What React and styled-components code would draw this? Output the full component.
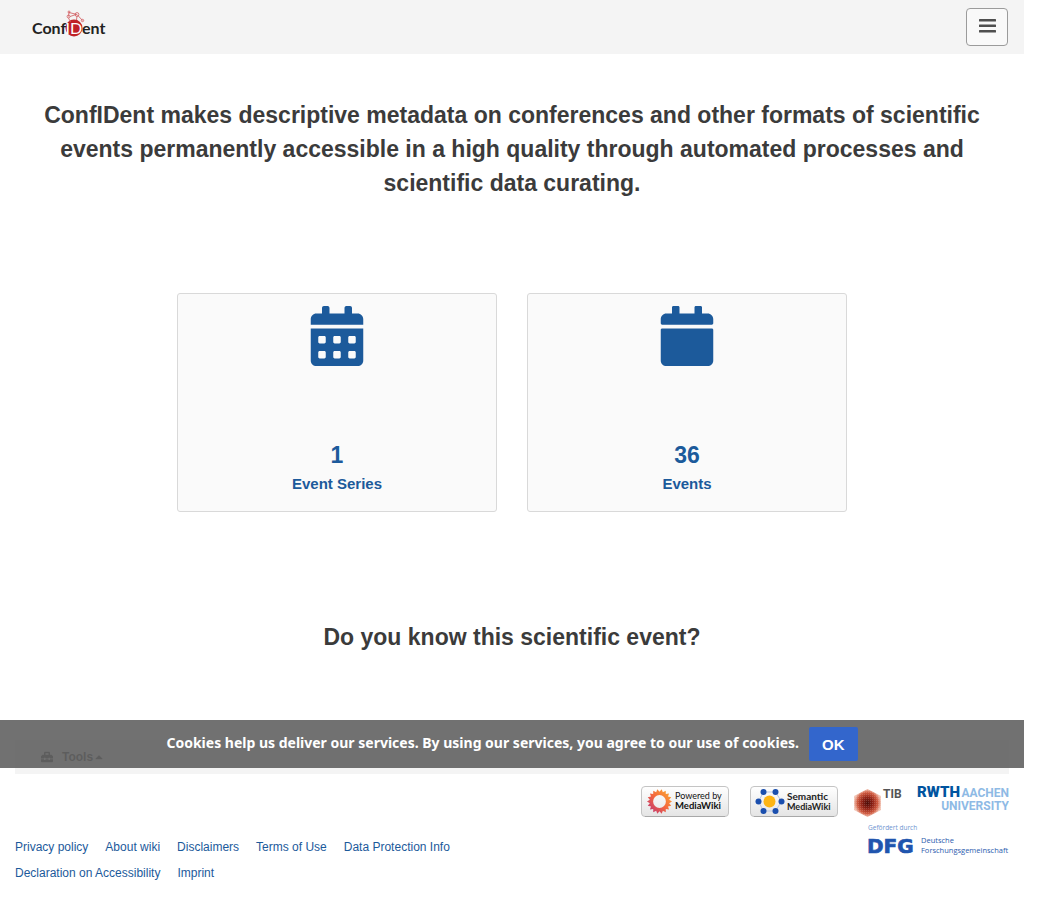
import React from "react";
import styled, { createGlobalStyle } from "styled-components";
import { FaCalendarAlt, FaCalendar, FaToolbox, FaCaretUp } from "react-icons/fa";

const GlobalStyle = createGlobalStyle`
  *, *::before, *::after { box-sizing: border-box; }
  body {
    margin: 0;
    padding-right: 15px;
    background: #fff;
    color: #3b3b3b;
    font-family: "Liberation Sans", Arial, sans-serif;
    font-size: 15px;
  }
`;

const Header = styled.header`
  display: flex;
  align-items: center;
  justify-content: space-between;
  height: 54px;
  padding: 0 16px 0 32px;
  background: #f4f4f4;
`;
const BrandLink = styled.a`
  display: block;
  height: 34px;
`;
const MenuButton = styled.button`
  display: flex;
  align-items: center;
  justify-content: center;
  width: 42px;
  height: 38px;
  padding: 0 0 2px;
  border: 1px solid #9b9b9b;
  border-radius: 4px;
  background: #f9f9f9;
  color: #4f4f4f;
`;
const Main = styled.main`
  display: flex;
  flex-direction: column;
  padding: 44px 15px 0;
`;
const Statement = styled.h2`
  margin: 0;
  padding: 0 15px;
  font-size: 23px;
  line-height: 34px;
  text-align: center;
`;
const Cards = styled.div`
  display: flex;
  justify-content: center;
  gap: 30px;
  padding: 93px 0 108px;
`;
const Card = styled.a`
  display: flex;
  flex-direction: column;
  align-items: center;
  width: 320px;
  padding: 12px 16px 15px;
  border: 1px solid #d9d9d9;
  border-radius: 3px;
  background: #fafafa;
  color: #1c5a9b;
  font-weight: 700;
  text-decoration: none;
  svg { font-size: 60px; }
`;
const Count = styled.span`
  margin-top: 72px;
  font-size: 23px;
  line-height: 34px;
`;
const CardLabel = styled.span`
  font-size: 15px;
  line-height: 24px;
`;
const Footer = styled.footer`
  padding: 86px 15px 24px;
`;
const ToolsArea = styled.div`
  position: relative;
`;
const ToolsBar = styled.div`
  display: flex;
  height: 34px;
  padding: 0 26px;
  background: #f4f4f4;
`;
const ToolsButton = styled.button`
  display: flex;
  align-items: center;
  padding: 0;
  border: 0;
  background: none;
  color: #3b3b3b;
  font: 700 12px "Liberation Sans", Arial, sans-serif;
  svg:first-child { margin-right: 9px; }
`;
const CookieNotice = styled.div`
  position: absolute;
  top: -20px;
  left: -15px;
  right: -15px;
  display: flex;
  align-items: center;
  justify-content: center;
  gap: 10px;
  height: 48px;
  background: rgba(98, 98, 98, 0.9);
  color: #fff;
  font-size: 14px;
  font-weight: 700;
  line-height: 20px;
`;
const CookieText = styled.span`
  padding-bottom: 2px;
  font-family: "Noto Sans", "Liberation Sans", sans-serif;
`;
const OkButton = styled.button`
  height: 34px;
  padding: 0 13px;
  border: 0;
  border-radius: 2px;
  background: #36c;
  color: #fff;
  font: 700 15px "Liberation Sans", Arial, sans-serif;
`;
const FooterBody = styled.div`
  display: flex;
  justify-content: space-between;
  padding-top: 12px;
`;
const Links = styled.ul`
  display: flex;
  flex-wrap: wrap;
  align-content: flex-start;
  column-gap: 17px;
  width: 48%;
  margin: 0;
  padding: 48px 0 0;
  list-style: none;
  font-size: 12px;
  line-height: 26px;
  a { color: #1c5a9b; text-decoration: none; }
`;
const Partners = styled.div`
  display: flex;
  flex-direction: column;
  align-items: flex-end;
  gap: 7px;
`;
const PartnerRow = styled.div`
  display: flex;
  align-items: flex-start;
`;
const PartnerLink = styled.a`
  display: block;
  height: 31px;
  margin-left: ${(p) => p.$space || 0}px;
  svg { display: block; }
`;

function MenuIcon() {
  return (
    <svg width="17" height="16" viewBox="0 0 17 16" fill="currentColor" aria-hidden="true">
      <rect y="1" width="17" height="2.600" rx=".5" />
      <rect y="6.500" width="17" height="2.600" rx=".5" />
      <rect y="12" width="17" height="2.600" rx=".5" />
    </svg>
  );
}

function ConfidentLogo() {
  return (
    <svg width="78" height="34" viewBox="0 0 78 34" role="img" aria-label="ConfIDent">
      <circle cx="42" cy="18" r="8.500" fill="#bf2127" />
      <g stroke="#d0585c" strokeWidth=".8" fill="none">
        <path d="M37 2.500l8 2 5.500 6M37 2.500l-.500 4M38 6.500l6-2M36.500 8l2 4M45 6l-.500 4" />
        <circle cx="37" cy="2" r="1" />
        <circle cx="36.500" cy="6.500" r="1.400" />
        <circle cx="45" cy="4.500" r="1.900" />
        <circle cx="50.500" cy="10.500" r="1.200" />
      </g>
      <g fontFamily="Lato, sans-serif" fontSize="16" fontWeight="700" fill="#222">
        <text x="0" y="23.500">Conf</text>
        <text x="50" y="23.500">ent</text>
        <text x="33.500" y="23.500" fill="#fff" fontWeight="400" fontSize="16">ID</text>
      </g>
    </svg>
  );
}

function Badge({ children, label }) {
  return (
    <svg width="88" height="31" viewBox="0 0 88 31" role="img" aria-label={label}>
      <defs>
        <linearGradient id="badge" x2="0" y2="1">
          <stop stopColor="#fff" />
          <stop offset="1" stopColor="#e4e4e4" />
        </linearGradient>
        <linearGradient id="flower" x1="1" x2="0" y2="1">
          <stop stopColor="#fcb32c" />
          <stop offset=".5" stopColor="#f4673d" />
          <stop offset="1" stopColor="#b52d80" />
        </linearGradient>
      </defs>
      <rect x=".5" y=".5" width="87" height="30" rx="3.500" fill="url(#badge)" stroke="#c4c4c4" />
      <path d="M4 30.500h80" stroke="#a8a8a8" />
      {children}
    </svg>
  );
}

function MediaWikiBadge() {
  const point = (radius, degrees) => {
    const t = (degrees * Math.PI) / 180;
    return `${(18.5 + radius * Math.cos(t)).toFixed(2)} ${(15.5 + radius * Math.sin(t)).toFixed(2)}`;
  };
  const petals = Array.from({ length: 18 }, (_, i) => i * 20)
    .map((a) => `${a ? "L" : "M"}${point(12.5, a)}L${point(9.8, a + 10)}`)
    .join("");
  return (
    <Badge label="Powered by MediaWiki">
      <path d={petals + "ZM24.900 15.500a6.400 6.400 0 1 0-12.800 0 6.400 6.400 0 1 0 12.800 0Z"} fill="url(#flower)" fillRule="evenodd" />
      <g fontFamily="Lato, sans-serif" fontSize="9.500" fill="#111">
        <text x="34" y="13" fontSize="9">Powered by</text>
        <text x="34" y="23" fontWeight="700">MediaWiki</text>
      </g>
    </Badge>
  );
}

function SemanticBadge() {
  const nodes = [[13.5, 6], [25.5, 6], [31.5, 15.5], [25.5, 25], [13.5, 25], [8.5, 15.5]];
  return (
    <Badge label="Semantic MediaWiki">
      <path d="M13.500 6h12l6 9.500-6 9.500h-12l-5-9.500z" fill="none" stroke="#b7c6e4" />
      {nodes.map(([x, y]) => <circle key={`${x}-${y}`} cx={x} cy={y} r="3" fill="#1b4fae" />)}
      <circle cx="19.500" cy="15.500" r="6" fill="#fdb515" />
      <g fontFamily="Lato, sans-serif" fill="#222" fontWeight="700">
        <text x="37" y="13.500" fontSize="10">Semantic</text>
        <text x="37" y="24" fontSize="9">MediaWiki</text>
      </g>
    </Badge>
  );
}

function TibLogo() {
  return (
    <svg width="48" height="31" viewBox="0 0 48 31" role="img" aria-label="TIB">
      <defs>
        <radialGradient id="tib">
          <stop stopColor="#4a0d08" />
          <stop offset=".4" stopColor="#8f2216" />
          <stop offset=".75" stopColor="#cf5a40" />
          <stop offset="1" stopColor="#f2c4b4" />
        </radialGradient>
        <pattern id="dots" width="2" height="2" patternUnits="userSpaceOnUse">
          <path d="M0 0h1v1H0z" fill="#fff" opacity=".16" />
        </pattern>
      </defs>
      <path d="M13.500 3L27 10v14l-13.500 7L0 24V10z" fill="url(#tib)" />
      <path d="M13.500 3L27 10v14l-13.500 7L0 24V10z" fill="url(#dots)" />
      <text x="29" y="12" fontFamily="Roboto, sans-serif" fontSize="12" fontWeight="700" fill="#555">TIB</text>
    </svg>
  );
}

function RwthLogo() {
  return (
    <svg width="92" height="26" viewBox="0 0 92 26" role="img" aria-label="RWTH Aachen University">
      <g fontFamily="Roboto, sans-serif" fontWeight="700">
        <text x="0" y="11" fill="#00549f" fontWeight="900" fontSize="15">RWTH</text>
        <text x="92" y="11" textAnchor="end" fill="#8ebae5" fontSize="12">AACHEN</text>
        <text x="92" y="24" textAnchor="end" fill="#8ebae5" fontSize="12">UNIVERSITY</text>
      </g>
    </svg>
  );
}

function DfgLogo() {
  return (
    <svg width="142" height="31" viewBox="0 0 142 31" role="img" aria-label="Gefördert durch DFG Deutsche Forschungsgemeinschaft">
      <g fontFamily='"Open Sans", sans-serif' fill="#2b5cae">
        <text x="1" y="6" fontSize="6.500" fill="#6d94d0">Gefördert durch</text>
        <text x="54" y="19" fontSize="7.500">Deutsche</text>
        <text x="54" y="29" fontSize="7.500">Forschungsgemeinschaft</text>
      </g>
      <text x="0" y="28.500" fontFamily='"DejaVu Sans", sans-serif' fontWeight="700" fontSize="20" fill="#1f55ae" stroke="#1f55ae" strokeWidth=".7">DFG</text>
    </svg>
  );
}

const links = ["Privacy policy", "About wiki", "Disclaimers", "Terms of Use", "Data Protection Info", "Declaration on Accessibility", "Imprint"];

export default function App() {
  return (
    <>
      <GlobalStyle />
      <Header>
        <BrandLink href="#"><ConfidentLogo /></BrandLink>
        <MenuButton aria-label="Menu"><MenuIcon /></MenuButton>
      </Header>
      <Main>
        <Statement>
          ConfIDent makes descriptive metadata on conferences and other formats of scientific events
          permanently accessible in a high quality through automated processes and scientific data curating.
        </Statement>
        <Cards>
          <Card href="#"><FaCalendarAlt /><Count>1</Count><CardLabel>Event Series</CardLabel></Card>
          <Card href="#"><FaCalendar /><Count>36</Count><CardLabel>Events</CardLabel></Card>
        </Cards>
        <Statement>Do you know this scientific event?</Statement>
      </Main>
      <Footer>
        <ToolsArea>
          <ToolsBar>
            <ToolsButton><FaToolbox />Tools<FaCaretUp /></ToolsButton>
          </ToolsBar>
          <CookieNotice>
            <CookieText>Cookies help us deliver our services. By using our services, you agree to our use of cookies.</CookieText>
            <OkButton>OK</OkButton>
          </CookieNotice>
        </ToolsArea>
        <FooterBody>
          <Links>{links.map((l) => <li key={l}><a href="#">{l}</a></li>)}</Links>
          <Partners>
            <PartnerRow>
              <PartnerLink href="#"><MediaWikiBadge /></PartnerLink>
              <PartnerLink href="#" $space={21}><SemanticBadge /></PartnerLink>
              <PartnerLink href="#" $space={16}><TibLogo /></PartnerLink>
              <PartnerLink href="#" $space={15}><RwthLogo /></PartnerLink>
            </PartnerRow>
            <PartnerLink href="#"><DfgLogo /></PartnerLink>
          </Partners>
        </FooterBody>
      </Footer>
    </>
  );
}
